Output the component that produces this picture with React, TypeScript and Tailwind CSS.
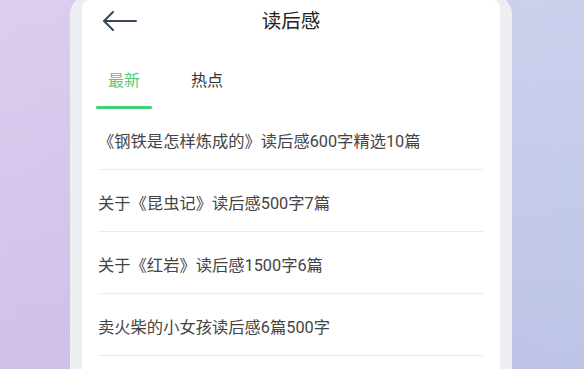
import React from "react";

const items = [
  "《钢铁是怎样炼成的》读后感600字精选10篇",
  "关于《昆虫记》读后感500字7篇",
  "关于《红岩》读后感1500字6篇",
  "卖火柴的小女孩读后感6篇500字",
];

export default function App() {
  return (
    <div
      className="w-[584px] h-[369px] overflow-hidden flex justify-start pl-[70px] bg-[linear-gradient(to_bottom,rgba(255,255,255,0.12),rgba(40,40,120,0.04)),linear-gradient(to_right,#d8c6ed,#cbc6ec_45%,#c3cbea)]"
      style={{ fontFamily: 'Roboto, "Noto Sans CJK SC", sans-serif' }}
    >
      <div className="w-[442px] h-[400px] shrink-0 mt-[-4px] rounded-t-[18px] bg-[linear-gradient(to_right,#eceef2,#f4f5f8_40%,#f4f5f8_60%,#eceef2)] px-[12px] pt-[4px]">
        <div className="h-full bg-white rounded-t-[8px] flex flex-col">
          {/* header */}
          <div className="relative h-[44px] shrink-0 flex items-center justify-center">
            <svg
              className="absolute left-[20px] top-[11px]"
              width="36"
              height="20"
              viewBox="0 0 36 20"
              fill="none"
              stroke="#3b4561"
              strokeWidth="2"
              strokeLinecap="round"
              strokeLinejoin="round"
            >
              <path d="M34 10H3" />
              <path d="M11 1L2 10l9 9" />
            </svg>
            <span className="text-[19.5px] text-[#222] leading-none">读后感</span>
          </div>
          {/* tabs */}
          <div className="flex shrink-0 gap-[27px] pl-[14px] h-[64px]">
            <div className="w-[56px] flex flex-col items-center justify-end">
              <span className="text-[16px] text-[#4fcc80] leading-none mb-[17px]">最新</span>
              <div className="w-[56px] h-[3px] bg-[#3fd373] rounded-full mb-[-1px]" />
            </div>
            <div className="w-[56px] flex flex-col items-center justify-end">
              <span className="text-[16px] text-[#333] leading-none mb-[19px]">热点</span>
            </div>
          </div>
          {/* list */}
          <div className="px-[16px] flex flex-col shrink-0">
            {items.map((t) => (
              <div
                key={t}
                className="pt-[23px] pb-[16px] border-b border-[#ececec] text-[16.3px] leading-[22px] text-[#444] whitespace-nowrap"
              >
                {t}
              </div>
            ))}
          </div>
        </div>
      </div>
    </div>
  );
}
